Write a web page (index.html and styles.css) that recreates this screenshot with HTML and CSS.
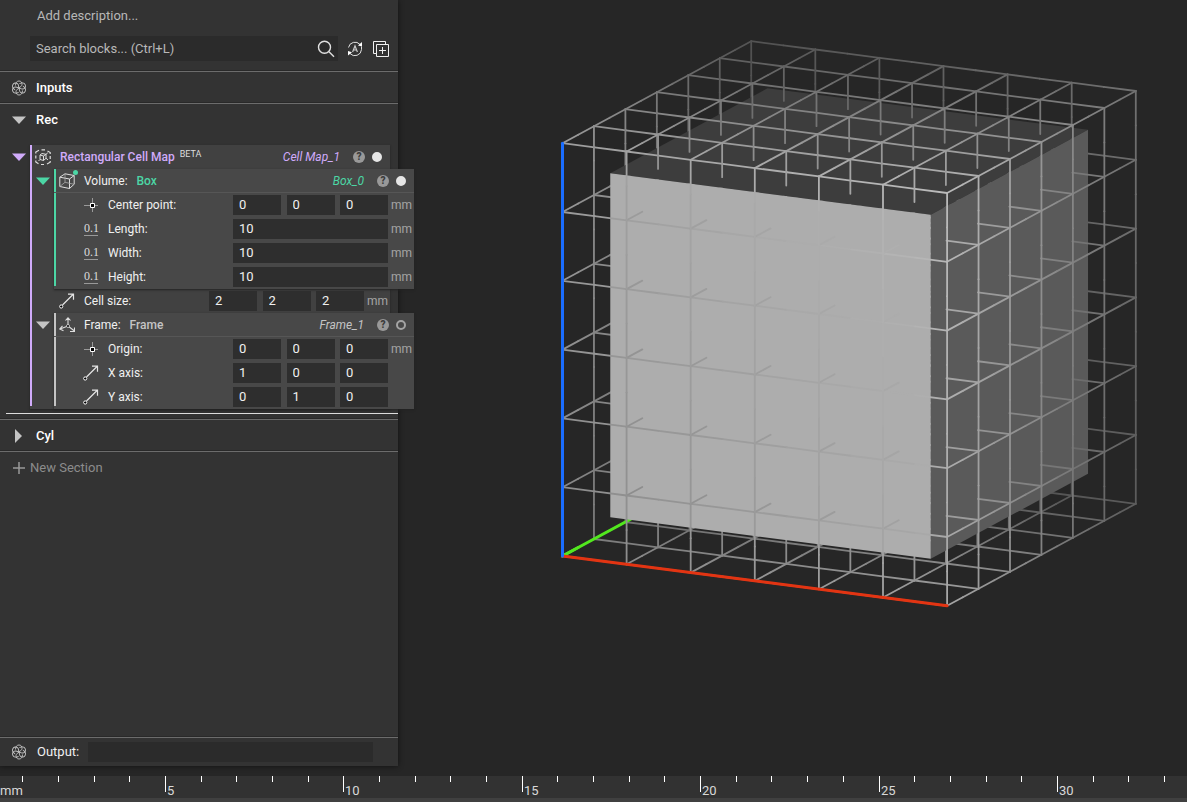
FILE: index.html
```html
<!DOCTYPE html>
<html lang="en">
<head>
<meta charset="utf-8">
<title>Notebook</title>
<link rel="stylesheet" href="styles.css">
</head>
<body>
<svg class="sprite" aria-hidden="true">
  <symbol id="i-knot" viewBox="0 0 16 16"><g fill="none" stroke="currentColor" stroke-width=".9"><path id="petal" d="M4.500 5.500C4.500 2.500 6 1 8 1s3.200 1.500 3 3.500c-.2 2-2 2.500-3.500 3.500"/><use href="#petal" transform="rotate(60 8 8)"/><use href="#petal" transform="rotate(120 8 8)"/><use href="#petal" transform="rotate(180 8 8)"/><use href="#petal" transform="rotate(240 8 8)"/><use href="#petal" transform="rotate(300 8 8)"/></g></symbol>
  <symbol id="i-down" viewBox="0 0 16 16"><path fill="currentColor" d="M1 4.500h14L8 12z"/></symbol>
  <symbol id="i-right" viewBox="0 0 16 16"><path fill="currentColor" d="M4 1v14l7-7z"/></symbol>
  <symbol id="i-point" viewBox="0 0 16 16"><path stroke="#999" d="M1 8.500h6M12 8.500h3M9.500 1v5M9.500 11v4"/><path fill="#000" stroke="#fff" d="M7.500 6.500h4v4h-4z"/></symbol>
  <symbol id="i-vector" viewBox="0 0 16 16"><path fill="none" stroke="#e4e4e4" stroke-width="1.200" d="M3.500 12L14.500 1M9 1.200h5.500v5.500"/><circle cx="2.200" cy="13.500" r="1.600" fill="#000" stroke="#fff"/></symbol>
  <symbol id="i-cube" viewBox="0 0 16 16"><g fill="none" stroke="#ddd" stroke-linejoin="round"><path d="M.8 4.200L10.500 6v9.500L.8 13.500zM.8 4.200L6 .8l9.200 1.700L10.500 6M15.200 2.500v8.700l-4.700 4.300"/><path stroke="#aaa" stroke-width=".8" d="M6 .8v8.500l9.200 2M6 9.300L.8 13.500"/></g></symbol>
  <symbol id="i-frame" viewBox="0 0 16 16"><g fill="none" stroke="#ddd" stroke-width="1.100"><path d="M9 9V1M6.500 3.500L9 .8l2.500 2.700M9 9l-8 3M3.500 8.800L.8 12l3.700 1.700M9 9l6.500 5M15.500 10.500V14.500h-4.500"/></g><circle cx="9" cy="9" r="1.500" fill="#000" stroke="#ddd" stroke-width=".8"/></symbol>
  <symbol id="i-cell" viewBox="0 0 16 16"><g fill="none" stroke="#ddd"><path d="M.8 4.500V3L4 1.200M6.500 .8h3.500M12.500 2l2.700 1.500V5M15.200 7v3M15.200 12v1.200L12 15M9 15.500H6M3.500 14.800L.8 13v-1.500M.8 9.500v-3" stroke-width="1.200"/><path d="M5 6l3.500 1v4.500L5 10.500zM5 6l2-1.500 4 .8L8.500 7M11 5.300v4l-2.500 2.200M3.500 12L5 10.500M11 9.300l2 1.500M11 5.300l1.800-1.500"/></g></symbol>
  <symbol id="i-search" viewBox="0 0 18 18"><g fill="none" stroke="#e0e0e0" stroke-width="1.400"><circle cx="7.500" cy="7.300" r="6"/><path d="M12 11.800l5 5"/></g></symbol>
  <symbol id="i-auto" viewBox="0 0 16 16"><g fill="none" stroke="#e0e0e0"><path d="M1.500 6.500A6.600 6.600 0 0 1 13 3.500M14.500 5.500v3A6.600 6.600 0 0 1 3 12.500"/><path d="M5.600 11L8 4.800l2.400 6.200M6.500 9h3" stroke="#ccc" stroke-width="1.200"/></g><path fill="#fff" d="M15 1v4.500l-4-1zM1 14.500V10l4 1.200z"/></symbol>
  <symbol id="i-add" viewBox="0 0 18 18"><g fill="none" stroke="#f0f0f0"><path d="M4 13.500H1.500v-12h12V4M4.500 4.500h12v12h-12zM10.500 7v7M7 10.500h7"/></g></symbol>
  <symbol id="i-plus" viewBox="0 0 16 16"><path fill="none" stroke="#999" stroke-width="1.500" d="M8 2v12M2 8h12"/></symbol>
</svg>

<main class="workspace">
  <aside class="panel">
    <p class="description">Add description...</p>
    <div class="search">
      <div class="search-box">
        <input class="search-input" type="text" aria-label="Search blocks" placeholder="Search blocks... (Ctrl+L)">
        <svg class="icon-lg"><use href="#i-search"/></svg>
      </div>
      <button class="btn" aria-label="Auto refresh"><svg class="icon"><use href="#i-auto"/></svg></button>
      <button class="btn" aria-label="Add block"><svg class="icon-lg"><use href="#i-add"/></svg></button>
    </div>

    <section class="section">
      <h2 class="section-head"><svg class="icon"><use href="#i-knot"/></svg>Inputs</h2>
    </section>

    <section class="section">
      <h2 class="section-head"><button class="btn" aria-label="Collapse Rec"><svg class="icon"><use href="#i-down"/></svg></button>Rec</h2>
      <div class="node node-root violet">
        <button class="btn toggle" aria-label="Collapse Rectangular Cell Map"><svg class="icon"><use href="#i-down"/></svg></button>
        <div class="block">
          <header class="head">
            <svg class="icon"><use href="#i-cell"/></svg>
            <span class="head-title tint strong">Rectangular Cell Map <span class="beta">BETA</span></span>
            <em class="var tint">Cell Map_1</em>
            <button class="help" aria-label="Help">?</button><i class="port port-on"></i>
          </header>
          <div class="node green">
            <button class="btn toggle" aria-label="Collapse Box"><svg class="icon"><use href="#i-down"/></svg></button>
            <div class="block nested">
              <header class="head ruled">
                <span class="badged"><svg class="icon"><use href="#i-cube"/></svg><i class="dot"></i></span>
                <span class="head-title">Volume: <span class="type tint strong">Box</span></span>
                <em class="var tint">Box_0</em>
                <button class="help" aria-label="Help">?</button><i class="port port-on"></i>
              </header>
              <div class="param">
                <svg class="icon"><use href="#i-point"/></svg><label for="center">Center point:</label>
                <div class="fields"><input class="field" id="center" value="0"><input class="field" aria-label="Center y" value="0"><input class="field" aria-label="Center z" value="0"></div>
                <span class="unit">mm</span>
              </div>
              <div class="param">
                <span class="scalar">0.1</span><label for="length">Length:</label>
                <div class="fields"><input class="field wide" id="length" value="10"></div><span class="unit">mm</span>
              </div>
              <div class="param">
                <span class="scalar">0.1</span><label for="width">Width:</label>
                <div class="fields"><input class="field wide" id="width" value="10"></div><span class="unit">mm</span>
              </div>
              <div class="param">
                <span class="scalar">0.1</span><label for="height">Height:</label>
                <div class="fields"><input class="field wide" id="height" value="10"></div><span class="unit">mm</span>
              </div>
            </div>
          </div>
          <div class="param">
            <svg class="icon"><use href="#i-vector"/></svg><label for="cell">Cell size:</label>
            <div class="fields"><input class="field" id="cell" value="2"><input class="field" aria-label="Cell size y" value="2"><input class="field" aria-label="Cell size z" value="2"></div>
            <span class="unit">mm</span>
          </div>
          <div class="node grey">
            <button class="btn toggle" aria-label="Collapse Frame"><svg class="icon"><use href="#i-down"/></svg></button>
            <div class="block nested">
              <header class="head ruled">
                <svg class="icon"><use href="#i-frame"/></svg>
                <span class="head-title">Frame: <span class="type tint strong">Frame</span></span>
                <em class="var tint">Frame_1</em>
                <button class="help" aria-label="Help">?</button><i class="port"></i>
              </header>
              <div class="param">
                <svg class="icon"><use href="#i-point"/></svg><label for="origin">Origin:</label>
                <div class="fields"><input class="field" id="origin" value="0"><input class="field" aria-label="Origin y" value="0"><input class="field" aria-label="Origin z" value="0"></div>
                <span class="unit">mm</span>
              </div>
              <div class="param">
                <svg class="icon"><use href="#i-vector"/></svg><label for="xaxis">X axis:</label>
                <div class="fields"><input class="field" id="xaxis" value="1"><input class="field" aria-label="X axis y" value="0"><input class="field" aria-label="X axis z" value="0"></div>
                <span class="unit"></span>
              </div>
              <div class="param">
                <svg class="icon"><use href="#i-vector"/></svg><label for="yaxis">Y axis:</label>
                <div class="fields"><input class="field" id="yaxis" value="0"><input class="field" aria-label="Y axis y" value="1"><input class="field" aria-label="Y axis z" value="0"></div>
                <span class="unit"></span>
              </div>
            </div>
          </div>
        </div>
      </div>
      <hr class="insert-line">
    </section>

    <section class="section">
      <h2 class="section-head"><button class="btn" aria-label="Expand Cyl"><svg class="icon"><use href="#i-right"/></svg></button>Cyl</h2>
    </section>
    <div class="section">
      <button class="new-section"><svg class="icon"><use href="#i-plus"/></svg>New Section</button>
    </div>

    <div class="section output">
      <svg class="icon"><use href="#i-knot"/></svg>
      <label for="output">Output:</label>
      <input class="output-field" id="output">
    </div>
  </aside>

  <svg class="scene" id="scene" viewBox="398 0 789 776" role="img" aria-label="Box inside a rectangular cell map"></svg>
</main>
<footer class="ruler"><svg class="ruler-scale" id="ruler"></svg></footer>
<script src="scene.js"></script>
</body>
</html>
```
FILE: styles.css
```css
* { box-sizing: border-box; }
body {
  margin: 0;
  height: 100vh;
  display: flex;
  flex-direction: column;
  overflow: hidden;
  background: #262626;
  color: #f0f0f0;
  font: 13px/24px Roboto, "Liberation Sans", sans-serif;
}
input, button { font: inherit; color: inherit; border: 0; margin: 0; }
.sprite { position: absolute; width: 0; height: 0; }
.icon { width: 16px; height: 16px; flex: none; display: block; }
.icon-lg { width: 18px; height: 18px; flex: none; display: block; }
.btn { background: none; padding: 0; display: block; flex: none; }

.workspace { flex: 1; min-height: 0; display: flex; }
.scene { flex: 1; min-width: 0; height: 100%; display: block; }
.panel {
  position: relative;
  z-index: 1;
  width: 398px;
  flex: none;
  margin-bottom: 10px;
  display: flex;
  flex-direction: column;
  background: #333;
  box-shadow: 0 0 5px #111;
}
.description { margin: 4px 0 8px 37px; color: #b8b8b8; }
.search { display: flex; align-items: center; gap: 9px; margin: 0 8px 10px 30px; }
.search-box { flex: 1; display: flex; align-items: center; height: 25px; padding: 1px 3px 0 6px; background: #2b2b2b; }
.search-input { flex: 1; min-width: 0; padding: 0; background: none; outline: 0; }
.search-input::placeholder { color: #b8b8b8; opacity: 1; }

.section { border-top: 1px solid #6c6c6c; box-shadow: 0 -1px 0 #292929; }
.section-head {
  display: flex;
  align-items: center;
  gap: 9px;
  height: 31px;
  margin: 0;
  padding-left: 11px;
  font-size: 13px;
  font-weight: 500;
  color: #fff;
}
.section-head .icon { color: #c4c4c4; }
.new-section { display: flex; align-items: center; gap: 3px; height: 31px; padding: 0 0 0 11px; background: none; color: #8c8c8c; }
.insert-line { margin: 4px 0 5px 6px; border: 0; border-top: 1px solid #ddd; }
.output { display: flex; align-items: center; margin-top: auto; height: 29px; padding: 0 25px 0 11px; }
.output .icon { margin-right: 10px; color: #c4c4c4; }
.output-field { flex: 1; min-width: 0; height: 20px; margin-left: 9px; padding: 0 6px; background: #2b2b2b; }

.violet { --tint: #d0abfa; }
.green { --tint: #4cd6a5; }
.grey { --tint: #c4c4c4; }
.tint { color: var(--tint); }
.strong { font-weight: 500; }
.node { display: grid; grid-template-columns: 24px 1fr; font-size: 12px; }
.node-root { grid-template-columns: 30px 1fr; margin: 10px 8px 0 0; }
.toggle { height: 24px; padding-left: 5px; color: var(--tint); }
.node-root > .toggle { padding-left: 11px; }
.block {
  min-width: 0;
  background: linear-gradient(var(--tint), var(--tint)) 0 0 / 2px calc(100% - 3px) no-repeat #414141;
  box-shadow: 0 1px 2px #222;
}
.nested { margin-right: -24px; background-color: #484848; }
.head { display: flex; align-items: center; height: 24px; padding: 0 8px 0 5px; }
.ruled { border-bottom: 1px solid #565656; }
.head-title { margin-left: 9px; flex: 1; white-space: nowrap; }
.type { margin-left: 6px; }
.beta { margin-left: 2px; font-size: 9px; font-weight: 400; line-height: 1; vertical-align: 4px; color: #ddd; }
.var { margin-right: 13px; }
.help { width: 12px; height: 12px; padding: 0; border-radius: 50%; background: #999; color: #3c3c3c; font-size: 10px; font-weight: 900; line-height: 12px; text-align: center; }
.port { width: 10px; height: 10px; margin-left: 7px; border: 2px solid #a4a4a4; border-radius: 50%; }
.port-on { border-color: #e6e6e6; background: #e6e6e6; }
.badged { position: relative; }
.dot { position: absolute; top: -3px; right: -3px; width: 5px; height: 5px; border-radius: 50%; background: var(--tint); }
.param { display: flex; align-items: center; height: 24px; padding-left: 29px; }
.param label { margin-left: 9px; }
.scalar { width: 14px; margin: 0 1px; height: 13px; font: 12px/11px "Liberation Serif", serif; color: #ddd; border-bottom: 1px solid #999; text-align: center; }
.fields { width: 155px; margin-left: auto; display: flex; justify-content: space-between; }
.field { width: 48px; height: 20px; padding: 0 6px; background: #2e2e2e; font-size: 13px; }
.wide { width: 100%; }
.unit { width: 26px; padding-left: 3px; color: #a4a4a4; }

.ruler { height: 26px; flex: none; background: #323232; border-bottom: 4px solid #404040; }
.ruler-scale { display: block; width: 100%; height: 22px; font-size: 13px; fill: #d8d8d8; }
```
FILE: scene.js
```javascript
const NS = 'http://www.w3.org/2000/svg';
const add = (parent, tag, attrs) => {
  const el = document.createElementNS(NS, tag);
  for (const k in attrs) el.setAttribute(k, attrs[k]);
  parent.appendChild(el);
  return el;
};

// Isometric-like projection of cell coordinates
const project = ([x, y, z]) => [562.5 + 64.1 * x + 31.45 * y, 556 + 8.3 * x - 17 * y - 68.8 * z];
const shade = ([x, y, z]) => Math.round(136 + 5 * x - 12.5 * y + 3.5 * z);

const scene = document.getElementById('scene');
const behind = add(scene, 'g', {});
const solid = add(scene, 'g', {});
const front = add(scene, 'g', {});
const N = 6, LO = 0.5, HI = 5.5;

const line = (group, a, b, color, width) => {
  const [x1, y1] = project(a), [x2, y2] = project(b);
  add(group, 'line', { x1, y1, x2, y2, stroke: color, 'stroke-width': width, 'stroke-linecap': 'round' });
};

// Half-cell pieces, farthest rows first, so the box faces can cut them
for (let axis = 0; axis < 3; axis++)
  for (let v = N; v >= 0; v--)
    for (let u = 0; u <= N; u++)
      for (let t = 0; t < N; t += 0.5) {
        const at = s => axis === 0 ? [s, v, u] : axis === 1 ? [u, s, v] : [u, v, s];
        const mid = at(t + 0.25);
        const visible = mid[1] < LO || mid[0] > HI || mid[2] > HI;
        const c = shade(mid);
        line(visible ? front : behind, at(t), at(t + 0.5), `rgb(${c},${c},${c})`, 1.8);
      }

const face = (points, fill) => add(solid, 'polygon', { points: points.map(project).join(' '), fill });
face([[LO, LO, HI], [HI, LO, HI], [HI, HI, HI], [LO, HI, HI]], '#3d3d3d');
face([[HI, LO, LO], [HI, HI, LO], [HI, HI, HI], [HI, LO, HI]], '#5a5a5a');
face([[LO, LO, LO], [HI, LO, LO], [HI, LO, HI], [LO, LO, HI]], '#adadad');

line(behind, [0, 0, 0], [0, 6, 0], '#52e81e', 3);
line(front, [0, 0, 0], [0, 0.5, 0], '#52e81e', 3);
line(front, [0, 0, 0], [6, 0, 0], '#e33412', 3);
line(front, [0, 0, 0], [0, 0, 6], '#1a6dff', 3);

// Ruler: one tick per millimetre, a number on every fifth
const ruler = document.getElementById('ruler');
const UNIT = 35.68, START = -13.5;
add(ruler, 'text', { x: 0, y: 19 }).textContent = 'mm';
for (let i = 1; START + i * UNIT < window.innerWidth; i++) {
  const x = Math.round(START + i * UNIT);
  const major = i % 5 === 0;
  add(ruler, 'rect', { x, y: 0, width: 1, height: major ? 16 : 6, fill: '#fff' });
  if (major) add(ruler, 'text', { x: x + 2, y: 19 }).textContent = i;
}
```
